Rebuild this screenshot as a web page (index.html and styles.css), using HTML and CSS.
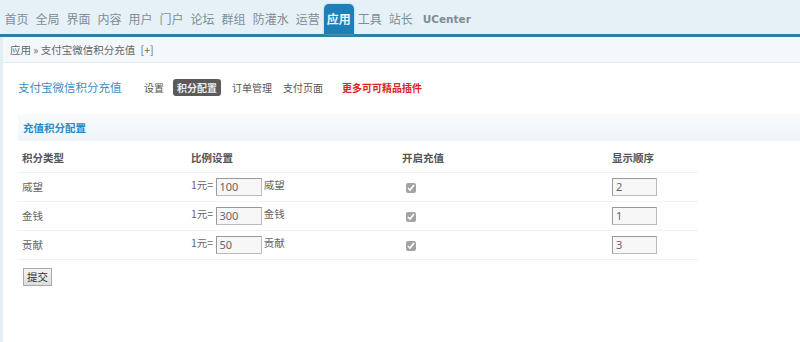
FILE: index.html
```html
<!DOCTYPE html>
<html lang="zh">
<head>
<meta charset="utf-8">
<link rel="stylesheet" href="styles.css">
</head>
<body>
<div class="header">
  <ul class="nav">
    <li>首页</li><li>全局</li><li>界面</li><li>内容</li><li>用户</li><li>门户</li><li>论坛</li><li>群组</li><li>防灌水</li><li>运营</li><li class="on">应用</li><li>工具</li><li>站长</li><li class="uc">UCenter</li>
  </ul>
</div>
<div class="frame">
  <div class="crumb">应用 &raquo; 支付宝微信积分充值 <span class="plus">[+]</span></div>
  <div class="main">
    <div class="titlebar">
      <h3 class="ptitle">支付宝微信积分充值</h3>
      <ul class="tabs">
        <li>设置</li>
        <li class="cur">积分配置</li>
        <li>订单管理</li>
        <li>支付页面</li>
        <li class="red">更多可可精品插件</li>
      </ul>
    </div>
    <div class="section">充值积分配置</div>
    <table class="tb">
      <tr class="th"><td class="c1">积分类型</td><td class="c2">比例设置</td><td class="c3">开启充值</td><td class="c4">显示顺序</td></tr>
      <tr><td>威望</td><td>1元= <input class="px" value="100"> 威望</td><td><input type="checkbox" class="cb" checked></td><td><input class="px" value="2"></td></tr>
      <tr><td>金钱</td><td>1元= <input class="px" value="300"> 金钱</td><td><input type="checkbox" class="cb" checked></td><td><input class="px" value="1"></td></tr>
      <tr><td>贡献</td><td>1元= <input class="px" value="50"> 贡献</td><td><input type="checkbox" class="cb" checked></td><td><input class="px" value="3"></td></tr>
    </table>
    <div class="submit"><button class="btn">提交</button></div>
  </div>
</div>
</body>
</html>
```

FILE: styles.css
```css
* { box-sizing: border-box; }
html, body { margin: 0; padding: 0; }
body {
  width: 800px; height: 342px; overflow: hidden;
  background: #fff;
  font: 12px/1.5 "Noto Sans CJK SC", "Noto Sans", sans-serif;
  color: #555;
}
.header {
  height: 37px;
  background: #e6f1f7;
  border-bottom: 3px solid #2e80a0;
  box-shadow: 0 1px 0 #b9dbe9;
}
.nav {
  list-style: none; margin: 0; padding: 4px 0 0 1.5px;
  display: flex; gap: 1px; height: 34px;
}
.nav li {
  padding: 0 3px; line-height: 30px; height: 30px;
  color: #7d8d98; font-size: 12px;
}
.nav li.on {
  background: #1d7fb6; color: #e9f4fb; font-weight: bold;
  border-radius: 5px 5px 0 0;
  box-shadow: 0 0 2px #73c5e4;
}
.nav li.uc { font-weight: bold; font-family: "DejaVu Sans", sans-serif; font-size: 10.5px; padding-left: 6px; }
.frame {
  border-left: 3px solid #e3eef5;
  height: 305px;
}
.crumb {
  height: 26px; line-height: 25px;
  background: #f3f8fc;
  border-bottom: 1px solid #e4ecf1;
  padding-left: 7px;
  font-size: 10.5px; color: #666;
}
.plus { margin-left: 3px; }
.main { padding: 0 0 0 15px; }
.titlebar { display: flex; align-items: center; height: 48px; padding-top: 1px; }
.ptitle {
  margin: 0; font-size: 11.5px; font-weight: normal; color: #3a8fc6; width: 126px;
}
.tabs { list-style: none; margin: 0; padding: 0; display: flex; align-items: center; }
.tabs li { font-size: 10px; color: #555; padding: 0; margin-right: 11px; height: 17px; line-height: 17px; }
.tabs li.cur { background: #5a5a5a; color: #eee; border-radius: 3px; padding: 0 4px; font-weight: bold; margin-left: -2px; }
.tabs li.red { color: #e21f26; font-weight: bold; margin-left: 8px; }
.section {
  margin-top: 3px;
  height: 27px; line-height: 28px;
  background: linear-gradient(#f8fbfd, #eef5fa);
  padding-left: 5px;
  color: #2a8ac2; font-weight: bold; font-size: 10.5px;
}
.tb { border-collapse: collapse; width: 680px; margin-top: 3px; }
.tb td { height: 29px; padding: 0 0 0 4px; font-size: 10.5px; color: #666; border-bottom: 1px solid #f0f2f4; vertical-align: middle; }
.tb tr.th td { font-weight: bold; height: 28px; color: #555; }
.c1 { width: 169px; }
.c2 { width: 211px; }
.c3 { width: 210px; }
.px {
  width: 46px; height: 18px; border: 1px solid #bbb; border-top-color: #999; border-left-color: #999;
  background: #f7f7f7; font: 11px "Noto Sans", sans-serif; color: #666; padding: 0 3px; vertical-align: middle;
}
.tb td:last-child .px { width: 45px; }
.cb { width: 10px; height: 10px; margin: 0 0 0 4px; vertical-align: middle; filter: grayscale(1) opacity(.6); }
.submit { padding: 7px 0 0 5px; }
.btn {
  font: 10.5px "Noto Sans CJK SC", sans-serif; color: #333;
  height: 18px; width: 29px; padding: 0;
  border: 1px solid #aaa; background: linear-gradient(#f4f4f4, #ddd); line-height: 14px;
}
```
